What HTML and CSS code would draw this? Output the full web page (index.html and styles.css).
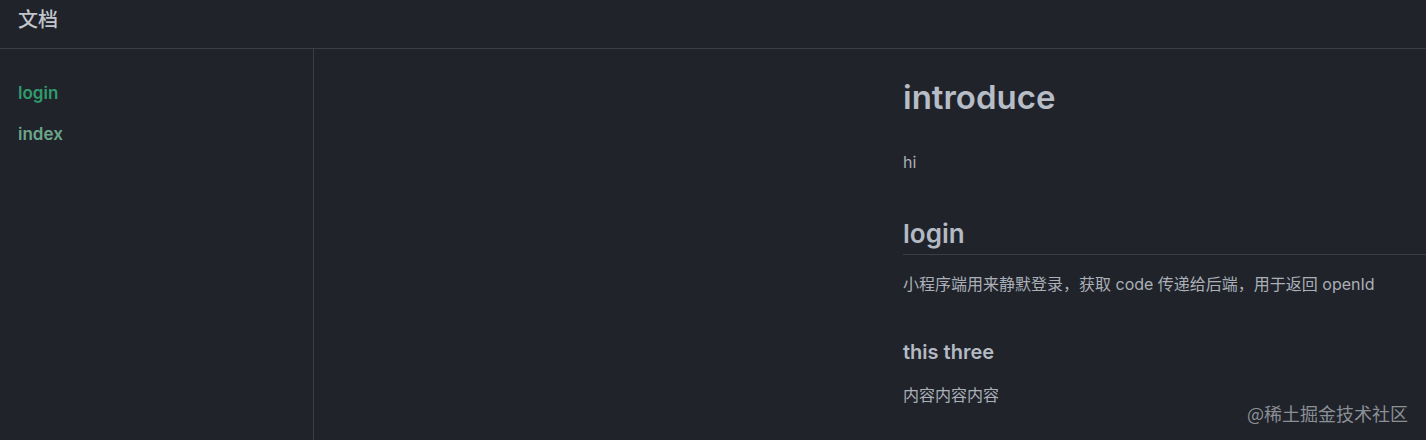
FILE: index.html
```html
<!DOCTYPE html>
<html lang="zh-CN">
<head>
<meta charset="utf-8">
<title>文档</title>
<link rel="stylesheet" href="styles.css">
</head>
<body>
<header class="topbar">
  <div class="brand">文档</div>
</header>
<div class="layout">
  <aside class="sidebar">
    <a class="nav-link active" href="#login">login</a>
    <a class="nav-link" href="#index">index</a>
  </aside>
  <main class="main">
    <article class="doc">
      <h1 class="doc-h1">introduce</h1>
      <p class="doc-p first">hi</p>
      <h2 class="doc-h2" id="login">login</h2>
      <p class="doc-p after-h2">小程序端用来静默登录，获取 code 传递给后端，用于返回 openId</p>
      <h3 class="doc-h3">this three</h3>
      <p class="doc-p after-h3">内容内容内容</p>
    </article>
  </main>
</div>
<div class="watermark">@稀土掘金技术社区</div>
</body>
</html>
```
FILE: styles.css
```css
* { box-sizing: border-box; }
html, body {
  margin: 0;
  padding: 0;
  height: 100%;
  background: #20232a;
  font-family: Inter, "Noto Sans CJK SC", sans-serif;
  overflow: hidden;
}
.topbar {
  height: 49px;
  border-bottom: 1px solid #3b3e45;
  padding: 0 18px;
}
.brand {
  line-height: 40px;
  font-size: 20px;
  font-weight: 500;
  color: #c2c5cb;
}
.layout {
  display: flex;
  height: calc(100% - 49px);
}
.sidebar {
  width: 314px;
  flex: none;
  border-right: 1px solid #3b3e45;
  padding: 24px 18px 0;
  display: flex;
  flex-direction: column;
}
.nav-link {
  display: block;
  line-height: 41px;
  font-size: 17px;
  font-weight: 600;
  text-decoration: none;
  color: #6ba68b;
}
.nav-link.active { color: #2f9c6c; }
.main {
  flex: 1;
  padding: 28px 0 0 589px;
  min-width: 0;
}
.doc { color: #aab0b8; }
.doc-h1 {
  margin: 0;
  font-size: 33px;
  line-height: 40px;
  font-weight: 600;
  color: #b7bdc6;
}
.doc-p {
  margin: 0;
  font-size: 16px;
  line-height: 24px;
  color: #abb0b8;
}
.doc-p.first { margin-top: 33px; }
.doc-h2 {
  margin: 42px 0 0;
  font-size: 26px;
  line-height: 36px;
  font-weight: 600;
  color: #b4bac3;
  padding-bottom: 2px;
  border-bottom: 1px solid #3b3e45;
}
.doc-p.after-h2 { margin-top: 17px; }
.doc-h3 {
  margin: 42px 0 0;
  font-size: 20px;
  line-height: 28px;
  font-weight: 600;
  color: #b4bac3;
}
.doc-p.after-h3 { margin-top: 17px; }
.watermark {
  position: absolute;
  right: 18px;
  bottom: 14px;
  font-size: 18px;
  line-height: 26px;
  color: #8b8f96;
  font-family: "Noto Sans CJK SC", sans-serif;
}
```
